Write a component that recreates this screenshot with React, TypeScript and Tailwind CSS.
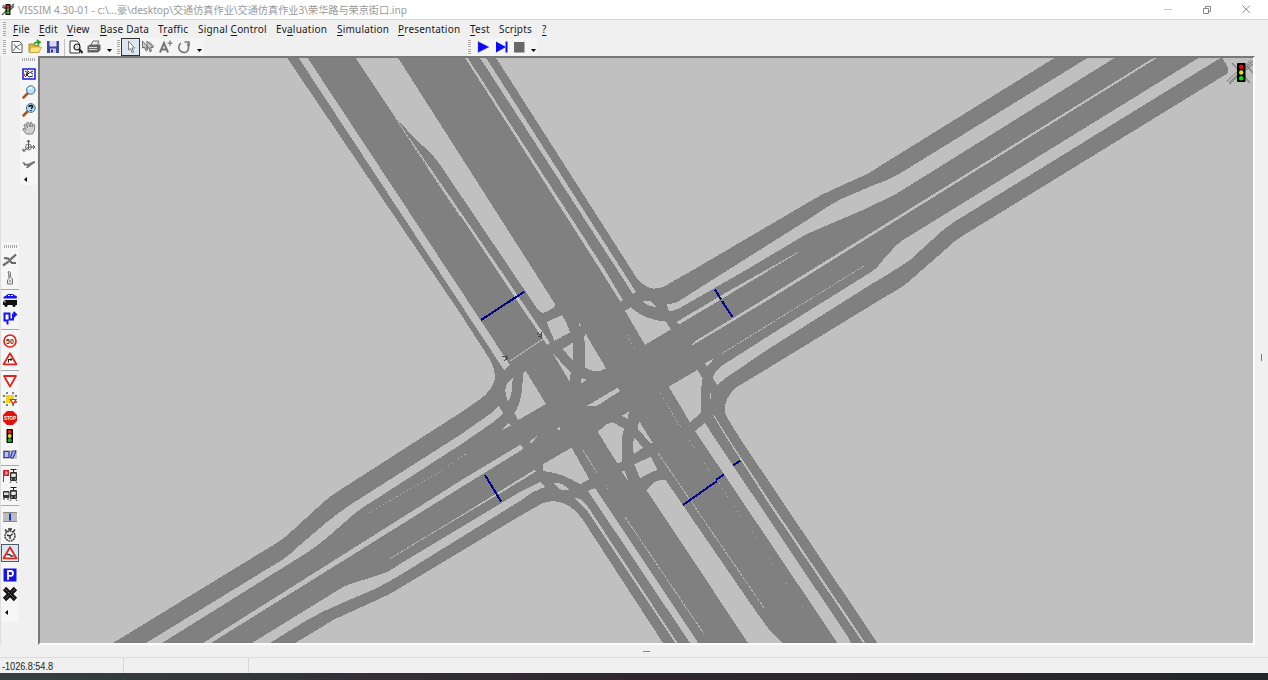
import React from "react";

type P = { children: React.ReactNode };

const Ico = ({ children }: P) => (
  <svg width="16" height="16" viewBox="0 0 16 16" fill="none" className="shrink-0">
    {children}
  </svg>
);

const GripV = () => (
  <div className="flex h-[14px] w-[3px] flex-col justify-between">
    {[0, 1, 2, 3, 4, 5, 6].map((i) => (
      <div key={i} className="h-px w-[3px] bg-[#a8a8a8]" />
    ))}
  </div>
);

const GripH = () => (
  <div className="flex h-[3px] w-[13px] justify-between">
    {[0, 1, 2, 3, 4, 5, 6].map((i) => (
      <div key={i} className="h-[3px] w-px bg-[#a8a8a8]" />
    ))}
  </div>
);

const Down = () => (
  <svg width="5" height="3" viewBox="0 0 5 3">
    <path d="M0 0H5L2.5 3Z" fill="#000" />
  </svg>
);

const Left = () => (
  <svg width="3" height="5" viewBox="0 0 3 5">
    <path d="M3 0V5L0 2.5Z" fill="#000" />
  </svg>
);

const Lamp = () => (
  <>
    <rect x="4.500" y="1" width="6.5" height="14" rx="0.8" fill="#000" />
    <circle cx="7.700" cy="3.8" r="2" fill="#e8201c" />
    <circle cx="7.700" cy="8" r="2" fill="#e8d61c" />
    <circle cx="7.700" cy="12.2" r="2" fill="#17b52a" />
  </>
);

const Tri = () => <path d="M8 2.2L14.4 13.3H1.6Z" fill="#fff" stroke="#e3221b" strokeWidth="1.8" strokeLinejoin="round" />;

const Tram = () => (
  <>
    <path d="M8.500 1.500H14.500M11.500 1V4" stroke="#222" />
    <rect x="8" y="4" width="7" height="9" rx="1" fill="#333" />
    <rect x="9.3" y="5.7" width="4.4" height="3.2" fill="#eee" />
    <path d="M9 11H10.3M12.8 11H14" stroke="#ddd" />
    <path d="M9 13.5L7.8 15M14 13.5L15.2 15" stroke="#333" />
  </>
);

const menus: [string, string, string, string][] = [
  ["", "F", "ile", "w-[26px]"],
  ["", "E", "dit", "w-[28px]"],
  ["", "V", "iew", "w-[33px]"],
  ["", "B", "ase Data", "w-[58px]"],
  ["T", "r", "affic", "w-[40px]"],
  ["Signal ", "C", "ontrol", "w-[78px]"],
  ["Ev", "a", "luation", "w-[61px]"],
  ["", "S", "imulation", "w-[61px]"],
  ["", "P", "resentation", "w-[72px]"],
  ["", "T", "est", "w-[29px]"],
  ["Scr", "i", "pts", "w-[43px]"],
  ["", "?", "", "w-[12px]"],
];

const gaps = [
  "M298 57H307L510 365L504 370Z",
  "M355 57H397.5L555 304Q555 307 553 308L546 312Q541 314 538 310L445 172Q434 155 423 146Q413 137 407 130L395 117Z",
  "M395 117L500.5 270L550 343L547 345L496.500 270Z",
  "M464.500 57H467L605 270L623 300L620.500 302L600.500 270Z",
  "M479.500 57H485.500L622 270L636 292L633 294L617.500 270Z",
  "M1089 57H1116L896 194L863 210L816 230L805 235L746 270L678 309Q672 311 669 311L666.500 304Q674 304 679 301L728 270L809 219Q826 207 841 199L874 185Q887 181 899 174Z",
  "M1155 57H1158.500L770 299L692 345.500Q693 342 697 340L770 295.500Z",
  "M676.500 322L727 292L798 252L731 293.500L679 324.500Z",
  "M1200 57H1222L954 222Q941 231 932 240L910 260Q891 273 870 285L770 348L727 377L717 385L713 378Q714 371 723 365L770 335L863 277Q872 272 877.500 267Q886 256 892 250Q896 245 903 240Z",
  "M705 363L714.500 358L707 367Z",
  "M146 643H162L308 552Q320 544 330 535L353 515Q361 508 370 503L460 445L492 423Q500 417 503 413L499 406L490 414L460 435L350 505Q337 514 327 522L300 545Q291 554 282 560Z",
  "M203 643H211L460 488L520 451Q524 449 523 447L520 445L460 481Z",
  "M400 552.500L460 516L534 470L536 471.500L500 493.500L460 517Z",
  "M252 643H270L307 620Q323 611 340 604L377 588L397 577L520 501L533 492L545 487L540 482L520 492L400 564Q393 569 387 572L363 580Q352 583 343 587Z",
  "M575 498L581 499Q587 504 592 513L677.500 643H675.500L588 512Z",
  "M588 491L595 488L698.500 643H690Z",
  "M646.500 490L652 484Q658 480 662 480Q665 479 667 482L757 613L768 628L782 643H748Z",
  "M695 431L705 423L716 440L848 637L851 643H837.500Z",
  "M713 415H714L729.500 440L771 503L865.500 643H863L769 504L728 440Z",
];

const islands = [
  "M260 157L305 135Q318 150 330 188L283 212Z",
  "M356 155L363 168H358Z",
  "M308 237L340 217L338 272Z",
  "M377 192L438 295Q410 313 375 293Q378 240 372 200Z",
  "M277 248L332 308L329 335Z",
  "M365 323L380 330L363 341Z",
  "M495 122L512 112Q555 150 618 155L633 178L555 225Z",
  "M547 94L572 94L590 112L562 105Z",
  "M380 408L473 353L480 363L420 402Q412 408 402 409Z",
  "M188 310L197 302L258 402L175 450L163 430Q190 390 188 310Z",
  "M158 323Q158 370 145 395Q122 350 158 323Z",
  "M120 483L145 460L152 467Z",
  "M413 485L440 463L457 457L492 475Q480 520 487 575L472 580Z",
  "M485 437L507 425L503 446Z",
  "M537 453L578 518L572 520L533 477Z",
  "M523 503L549 533L522 552Q515 525 523 503Z",
  "M523 583L572 560L593 600Q565 608 540 626Z",
  "M485 605L494 602L506 635Z",
  "M248 583L335 533L388 628L360 643Q310 610 250 603Z",
  "M283 640L300 640Q315 645 327 660Q298 666 283 640Z",
  "M626 350L712 300L728 325Q718 380 724 428L690 457Z",
  "M750 370H753V388H750Z",
  "M208 515L235 495L214 521Z",
  "M290 477L299 471V480Z",
];

const Network = () => (
  <svg width="1213" height="585" viewBox="40 58 1213 585" className="block" shapeRendering="crispEdges">
    <path
      fill="#808080"
      d="M286.500 57H495.500L638 280Q645 287 653 288.500Q662 289 670 283L693 270L809 202Q822 194 834 189L865 175Q875 170 884 163.500L1056 57H1222L1228 68V73L964 235Q954 241 946 249L914 277Q902 288 888 295L770 367L737 387Q725 397 725 408Q724 413 728 419L741 440L877.500 643H663L583 520Q574 507 563 503Q551 499 541 504L520 516L400 588Q389 595 377 600L333 620Q325 625 317 630L295 643H113L270 547Q283 540 293 530L317 508Q327 498 340 490L460 413L482 398Q493 388 494.500 380Q496 370 489 358L460 313Z"
    />
    <g fill="#c0c0c0">
      {gaps.map((d) => (
        <path key={d} d={d} />
      ))}
      <g transform="translate(460 270) scale(.33333)">
        {islands.map((d) => (
          <path key={d} d={d} />
        ))}
      </g>
    </g>
    <g stroke="#b4b4b4" strokeWidth="1" fill="none">
      <path d="M722 353.500L864 266" strokeDasharray="2 1" />
      <path d="M390 558.500L460 516.500M731 293L798 252.500" strokeDasharray="3 1" />
      <path d="M395 117L430 171L460 216" strokeDasharray="4 1" />
      <path d="M583 450L597 473M625 517L704 634M658 453L764 608" strokeDasharray="4 1" />
      <path d="M660 393L681 428M627 335L635 350M689 440L696 450M704 463L711 473M719 483L728 498M734 506L742 519M752 532L758 542M769 558L774 566M786 583L788 586M802 606L804 609M606 485L608 489" strokeDasharray="1 2" />
      <path d="M369 513L436 474L467 453" strokeDasharray="1 3" />
      <path d="M510 361L543 339" />
    </g>
    <g stroke="#00008b" strokeWidth="2">
      <path d="M481 320L524.500 291.500M715 289.500L721 299.500M722 301L732.500 317M485 475L501 501.500M683 505L717 481M716 480L724 474.500M733 465.500L740.500 460.500" />
    </g>
    <g stroke="#444" strokeWidth="1" fill="none">
      <path d="M502 356L508 358L504 361M506 355V359" />
      <path d="M537 333L541 335M538 336H541M541 332V339" />
    </g>
    <g stroke="#808080" strokeWidth="1.200" shapeRendering="auto">
      <path d="M1229 83L1253 61M1232 63L1250 83M1246 70L1253 64M1247 66L1253 73" />
      <path d="M1227 81L1237 72M1230 84L1239 75M1244 67L1251 60" strokeDasharray="2 1" />
    </g>
    <g shapeRendering="auto">
      <rect x="1237" y="63" width="8.500" height="19" rx="1" fill="#000" />
      <circle cx="1241.200" cy="66.800" r="2.200" fill="#f00" />
      <circle cx="1241.200" cy="72.500" r="2.200" fill="#e8e000" />
      <circle cx="1241.200" cy="78.200" r="2.200" fill="#00e800" />
    </g>
  </svg>
);

const Cell = ({ children }: P) => <div className="flex h-[18px] w-[18px] items-center justify-center">{children}</div>;

const Sep = ({ tall }: { tall?: boolean }) => (
  <div className={tall ? "flex h-[5px] flex-col justify-center" : "flex h-[4px] flex-col justify-center"}>
    <div className="h-px w-[18px] bg-[#a9a9a9]" />
  </div>
);

const ViewTools = () => (
  <div className="ml-[20px] flex h-[128px] w-[17px] flex-col items-center bg-[#f6f6f6] pt-[1px]">
    <GripH />
    <div className="h-[4px]" />
    <Cell><Ico><rect x="2" y="3" width="12" height="10" fill="#fff" stroke="#1818e8" strokeWidth="1.500" /><path d="M4 5L7 7L5 8L8 11L12 10M4 11L8 7L12 5M10 7L12 8M6 4.500L8 6" stroke="#222" /><path d="M3.500 8V10" stroke="#e22" /></Ico></Cell>
    <Cell><Ico><path d="M7 9L2.500 13.500" stroke="#b0541c" strokeWidth="2.600" strokeLinecap="round" /><circle cx="9.800" cy="6" r="4.200" fill="#b9e4f8" stroke="#3a6f96" /><path d="M7.500 5Q9 3 11 4" stroke="#fff" strokeWidth="1.500" /></Ico></Cell>
    <Cell><Ico><path d="M7 9L2.500 13.500" stroke="#b0541c" strokeWidth="2.600" strokeLinecap="round" /><circle cx="9.800" cy="6" r="4.400" fill="#a6d8f0" stroke="#3a6f96" /><path d="M8 5Q8 3.500 10 3.500Q12 3.700 11.500 5.200L10 6.500M10 8V9" stroke="#000" strokeWidth="1.400" /></Ico></Cell>
    <Cell><Ico><path d="M5.500 14L2 10Q1.500 8 3 8.500L5 10L2.800 5Q3.500 3.500 5 5L6.500 7.500L5.500 3Q6.500 1.500 7.800 3L9 7L9.200 2.500Q10.500 1.500 11 3.200L11.200 7L12.200 4.500Q13.500 4 13.800 5.500L13.500 10L11.500 14Z" fill="#d0d0d0" stroke="#777" strokeWidth=".9" /></Ico></Cell>
    <Cell><Ico><path d="M7.500 11V2M6 4L7.500 2L9 4M7.500 9H14M12 7L14 9L12 11M7.500 9L2 13M2 10.500V13H4.500" stroke="#555" /><circle cx="7.500" cy="9" r="3" stroke="#777" /></Ico></Cell>
    <Cell><Ico><path d="M1.500 6.500L3 6L5 8L8 7.600L13 5Q14.800 5 14 6.800L10.500 9L7 12H5L6.500 9.500L3.500 9.800Z" fill="#757575" /></Ico></Cell>
    <div className="flex h-[12px] w-full items-center pl-[4px]"><Left /></div>
  </div>
);

const NetTools = () => (
  <div className="ml-[1px] mt-[57px] flex w-[18px] flex-col items-center bg-[#f6f6f6]">
    <div className="flex h-[9px] items-center"><GripH /></div>
    <Cell><Ico><path d="M1 13.500L6 10L14 2.500M2 6L6 6.500L10 11H14M5 11L11 5" stroke="#666" strokeWidth="2.200" /><path d="M3 12.500L13 3.500" stroke="#bbb" strokeWidth=".500" strokeDasharray="2 1" /></Ico></Cell>
    <Cell><Ico><path d="M6 2L7.500 1.500L8.500 3V7L10.500 9V14H5.500V10L7 8.500L6.500 3Z" fill="#e4e4e4" stroke="#777" /><path d="M7 11H9M7 6H8" stroke="#777" /></Ico></Cell>
    <Sep />
    <Cell><Ico><path d="M1.500 5L4 3.500L6 2H11L13 3.500L14.800 4V6.500H1.500Z" fill="#1414f0" /><path d="M6 3.500H8M9 3.500H11" stroke="#fff" /><path d="M1 10L3 8H15V13H1Z" fill="#111" /><path d="M2 9.800H4" stroke="#ccc" /><circle cx="4" cy="13.500" r="1.500" fill="#111" /><circle cx="12" cy="13.500" r="1.500" fill="#111" /></Ico></Cell>
    <Cell><Ico><path d="M5.500 14.500V10.500H2.500V3.500H7.500V9.500H11V4.500H14M11.500 2L14 4.500L11.500 7" stroke="#1414f0" strokeWidth="2" /></Ico></Cell>
    <Sep tall />
    <Cell><Ico><circle cx="8" cy="8" r="6" fill="#fff" stroke="#e3221b" strokeWidth="1.700" /><text x="8" y="10.600" fontSize="7" fontWeight="700" textAnchor="middle" fontFamily="Liberation Sans, sans-serif" fill="#333">50</text></Ico></Cell>
    <Cell><Ico><Tri /><path d="M6.500 11.500V8.500H9.500M8.500 7.300L9.800 8.500L8.500 9.700" stroke="#222" strokeWidth="1.100" /></Ico></Cell>
    <Sep />
    <Cell><Ico><path d="M2 3H14L8 13.500Z" fill="#fff" stroke="#e3221b" strokeWidth="1.800" strokeLinejoin="round" /></Ico></Cell>
    <Cell><Ico><path d="M5 1V15M11 1V15M1 5H15M1 11H15" stroke="#777" strokeWidth="1.800" strokeDasharray="2 1" /><rect x="4" y="4" width="8" height="8" fill="#ead71c" /><path d="M8.500 8.500H14L11.200 13Z" fill="#fff" stroke="#e3221b" strokeWidth="1.200" /></Ico></Cell>
    <div className="h-px" />
    <Cell><Ico><path d="M5 1H11L15 5V11L11 15H5L1 11V5Z" fill="#e3120f" /><text x="8" y="10.300" fontSize="6.200" fontWeight="700" textAnchor="middle" textLength="12" lengthAdjust="spacingAndGlyphs" fontFamily="Liberation Sans, sans-serif" fill="#fff">STOP</text></Ico></Cell>
    <Cell><Ico><Lamp /></Ico></Cell>
    <Cell><Ico><rect x="1" y="4" width="14" height="9" fill="#c4c4c4" /><path d="M2 5.500H7V11.500H2ZM8.500 12L10.500 5M11 12L14 5M9 12H11M11 5H14" stroke="#1c33e8" strokeWidth="1.200" /></Ico></Cell>
    <Sep />
    <Cell><Ico><path d="M1.500 2V14" stroke="#555" /><rect x="1" y="2" width="6" height="6" fill="#d82424" /><path d="M3 4H5V6H3" stroke="#fff" strokeWidth=".7" /><Tram /></Ico></Cell>
    <Cell><Ico><rect x="1" y="5" width="6.500" height="7" rx="1" fill="#333" /><rect x="2" y="6.500" width="4.500" height="2.500" fill="#ddd" /><path d="M2 12V14M6 12V14" stroke="#222" /><Tram /></Ico></Cell>
    <Sep tall />
    <Cell><Ico><rect x="1" y="3" width="14" height="10" fill="#bdbdbd" /><path d="M1 3.500H15M1 12.500H15" stroke="#888" /><rect x="7" y="4.500" width="2" height="7" fill="#1231e0" /></Ico></Cell>
    <Cell><Ico><circle cx="8" cy="9" r="5" fill="#eee" stroke="#444" strokeWidth="1.600" strokeDasharray="1.800 .7" /><path d="M8 9L10.500 7M8 9L5 8M8 9V12M6 2H10M8 2V4M3 2.500L5 5M13 2.500L11 5" stroke="#333" strokeWidth="1.400" /></Ico></Cell>
    <div className="flex h-[18px] w-[18px] items-center justify-center border border-[#4b5a68] bg-[#dde7f0]">
      <Ico><Tri /><path d="M5 9.500H7.500L9 11H11.500" stroke="#333" strokeWidth="1.500" /></Ico>
    </div>
    <div className="h-[4px]" />
    <Cell><Ico><rect x="1.500" y="1.500" width="13" height="13" fill="#1414e6" /><path d="M6 13V4H9Q11 4.200 11 6.300Q11 8.800 9 8.800H6" stroke="#fff" strokeWidth="1.800" /></Ico></Cell>
    <div className="h-px" />
    <Cell><Ico><path d="M2.500 2.500L13.500 13.500M13.500 2.500L2.500 13.500" stroke="#111" strokeWidth="4.600" /><path d="M2.500 2.500L13.500 13.500M13.500 2.500L9.500 6.500M6.500 9.500L2.500 13.500" stroke="#bbb" strokeWidth=".700" strokeDasharray="1.500 1" /></Ico></Cell>
    <div className="flex h-[19px] w-full items-center pl-[4px]"><Left /></div>
  </div>
);

const Toolbar = () => (
  <div className="flex h-[18px] items-center pl-[3px]">
    <div className="flex h-[18px] w-[201px] items-center bg-[#f5f5f5]">
      <GripV />
      <div className="w-[2px]" />
      <Cell><Ico><path d="M3 2.500H10.500L13 5V13.500H3Z" fill="#fff" stroke="#555" /><path d="M4 12L7 8L12 5M5 5L7 8L11 11" stroke="#666" /></Ico></Cell>
      <Cell><Ico><path d="M2 5H6L7 6.500H12V13H2Z" fill="#e9bd31" stroke="#8f7415" strokeWidth=".8" /><path d="M4 8H14.500L12 13.500H2Z" fill="#fae37a" stroke="#b38d1e" strokeWidth=".6" /><path d="M7 5.500Q8 2.500 12 3.200M10 1L13 3.200L10.500 5.500" stroke="#2f9e31" strokeWidth="1.700" /></Ico></Cell>
      <Cell><Ico><rect x="2" y="2" width="12" height="12" fill="#3d46a4" /><rect x="4.500" y="2" width="7" height="5.500" fill="#d7dcf2" /><rect x="5" y="9.500" width="6" height="4.500" fill="#c8c8d8" /><rect x="6" y="10.500" width="2" height="3" fill="#30377f" /></Ico></Cell>
      <div className="mx-[2px] h-[17px] w-px bg-[#c2c2c2]" />
      <Cell><Ico><path d="M2 2H9L11.500 5V14H2Z" fill="#fff" stroke="#333" /><circle cx="9" cy="8" r="3" fill="#ddd" stroke="#222" strokeWidth="1.200" /><path d="M11 10L14.500 14" stroke="#222" strokeWidth="2" /></Ico></Cell>
      <Cell><Ico><path d="M5 6L7 2H13L11.500 6" fill="#eee" stroke="#666" /><path d="M1.500 7L4 5.500H14.500V11L12 13.500H1.500Z" fill="#666" /><path d="M3 8.500H11M3 10.500H11" stroke="#ddd" /></Ico></Cell>
      <div className="ml-[4px] mr-[5px] mt-[7px] flex"><Down /></div>
      <GripV />
      <div className="ml-[1px] flex h-[18px] w-[19px] items-center justify-center border border-[#333] bg-[#dbe8f2]">
        <Ico><path d="M5.500 2V11L7.500 9.500L9 13.500L10.500 13L9 9H11.500Z" fill="#fff" stroke="#777" /></Ico>
      </div>
      <div className="-ml-px" />
      <Cell><Ico><path d="M2.500 2V9L4.500 8L6 12L7.500 11L6.500 8H8ZM7 2V10L9 8.500L10 13L11.500 12L10.500 8.500H13ZM9.500 3L14 8" stroke="#707070" fill="#ccc" /></Ico></Cell>
      <Cell><Ico><path d="M2 13.500L6 4L10 13.500M3.500 10.500H8.500" stroke="#777" strokeWidth="2" /><path d="M12 1.500V7M9.500 4.200H14.500" stroke="#777" strokeWidth="1.200" /></Ico></Cell>
      <Cell><Ico><path d="M5 4Q1.500 7 3.500 11Q6 14.500 10.500 13Q14 10 11.500 4.500M8.500 3H13V7.500" stroke="#777" strokeWidth="1.600" /></Ico></Cell>
      <div className="ml-[4px] mt-[7px] flex"><Down /></div>
    </div>
    <div className="ml-[263px] flex h-[18px] w-[70px] items-center bg-[#f5f5f5] pl-[1px]">
      <GripV />
      <div className="w-[3px]" />
      <Cell><Ico><path d="M3 2.500L14 8L3 13.500Z" fill="#0a0aff" stroke="#667" strokeWidth=".4" /></Ico></Cell>
      <Cell><Ico><path d="M3 2.500L13 8L3 13.500Z" fill="#0a0aff" /><path d="M13.500 2.500V13.500" stroke="#0a0aff" strokeWidth="2" /></Ico></Cell>
      <Cell><Ico><rect x="3" y="3" width="10.500" height="10.500" fill="#686868" /></Ico></Cell>
      <div className="ml-[3px] mt-[7px] flex"><Down /></div>
    </div>
  </div>
);

export default function App() {
  return (
    <div className="flex h-[680px] w-[1268px] flex-col overflow-hidden bg-[#f0f0f0] font-['Noto_Sans','Noto_Sans_CJK_SC',sans-serif]">
      <div className="flex h-[20px] items-center border-b border-[#d6d6d6] bg-white pl-[1px]">
        <svg width="14" height="14" viewBox="0 0 14 14">
          <path d="M1 4L5 6M1 12L5 8L13 1M9 7L13 3M2 2L5 5" stroke="#555" strokeWidth="1.300" />
          <rect x="4.500" y="1" width="5" height="11" fill="#111" />
          <circle cx="7" cy="3.500" r="1.500" fill="#e22" />
          <circle cx="7" cy="6.500" r="1.300" fill="#a93" />
          <circle cx="7" cy="9.500" r="1.500" fill="#2c2" />
        </svg>
        <svg width="392" height="18" className="ml-[3px]">
          <text x="0" y="13" fontSize="10" fill="#999" textLength="389" lengthAdjust="spacingAndGlyphs">
            {"VISSIM 4.30-01 - c:\\...豪\\desktop\\交通仿真作业\\交通仿真作业3\\荣华路与荣京街口.inp"}
          </text>
        </svg>
        <div className="ml-auto flex items-center gap-[31px] pr-[17px]">
          <svg width="9" height="9"><path d="M1 4.500H9" stroke="#ccc" /></svg>
          <svg width="8" height="8" fill="none" stroke="#888"><path d="M.5 2.500H5.500V7.500H.5ZM2.500 2.500V.5H7.500V5.500H5.500" /></svg>
          <svg width="9" height="9" stroke="#888"><path d="M.5 .5L8 8M8 .5L.5 8" /></svg>
        </div>
      </div>
      <div className="flex h-[18px] items-center pl-[3px] text-[10px] leading-[14px] tracking-[0.2px] text-[#1a1a1a]">
        <GripV />
        <div className="w-[7px]" />
        {menus.map(([a, u, b, w]) => (
          <div key={a + u + b} className={`${w} shrink-0 whitespace-pre`}>
            {a}
            <span className="underline underline-offset-[1.500px]">{u}</span>
            {b}
          </div>
        ))}
      </div>
      <Toolbar />
      <div className="flex h-[589px]">
        <div className="flex w-[38px] shrink-0 flex-col border-l border-[#dedede] pt-[1px]">
          <div className="-ml-px flex flex-col">
            <ViewTools />
            <NetTools />
          </div>
        </div>
        <div className="h-[589px] w-[1217px] shrink-0 border-b-2 border-l-2 border-r-2 border-t-2 border-b-white border-l-[#787878] border-r-white border-t-[#787878] bg-[#c0c0c0]">
          <Network />
        </div>
        <div className="flex flex-1 items-center justify-center">
          <div className="mt-[14px] h-[7px] w-px bg-[#777]" />
        </div>
      </div>
      <div className="flex h-[13px] items-center border-b border-[#dcdcdc] pl-[643px]">
        <div className="h-px w-[7px] bg-[#888]" />
      </div>
      <div className="flex h-[15px] items-center">
        <div className="flex h-[15px] w-[124px] items-center border-r border-[#d6d6d6] pl-[2px]">
          <svg width="60" height="13" viewBox="0 0 60 13">
            <text x="0" y="10.500" fontSize="10.500" fontFamily="Liberation Sans, sans-serif" fill="#222" textLength="51" lengthAdjust="spacingAndGlyphs">-1026.8:54.8</text>
          </svg>
        </div>
        <div className="h-[15px] w-[125px] border-r border-[#d6d6d6]" />
      </div>
      <div className="flex-1 bg-gradient-to-r from-[#343f41] via-[#30262f] to-[#24262c]" />
    </div>
  );
}
